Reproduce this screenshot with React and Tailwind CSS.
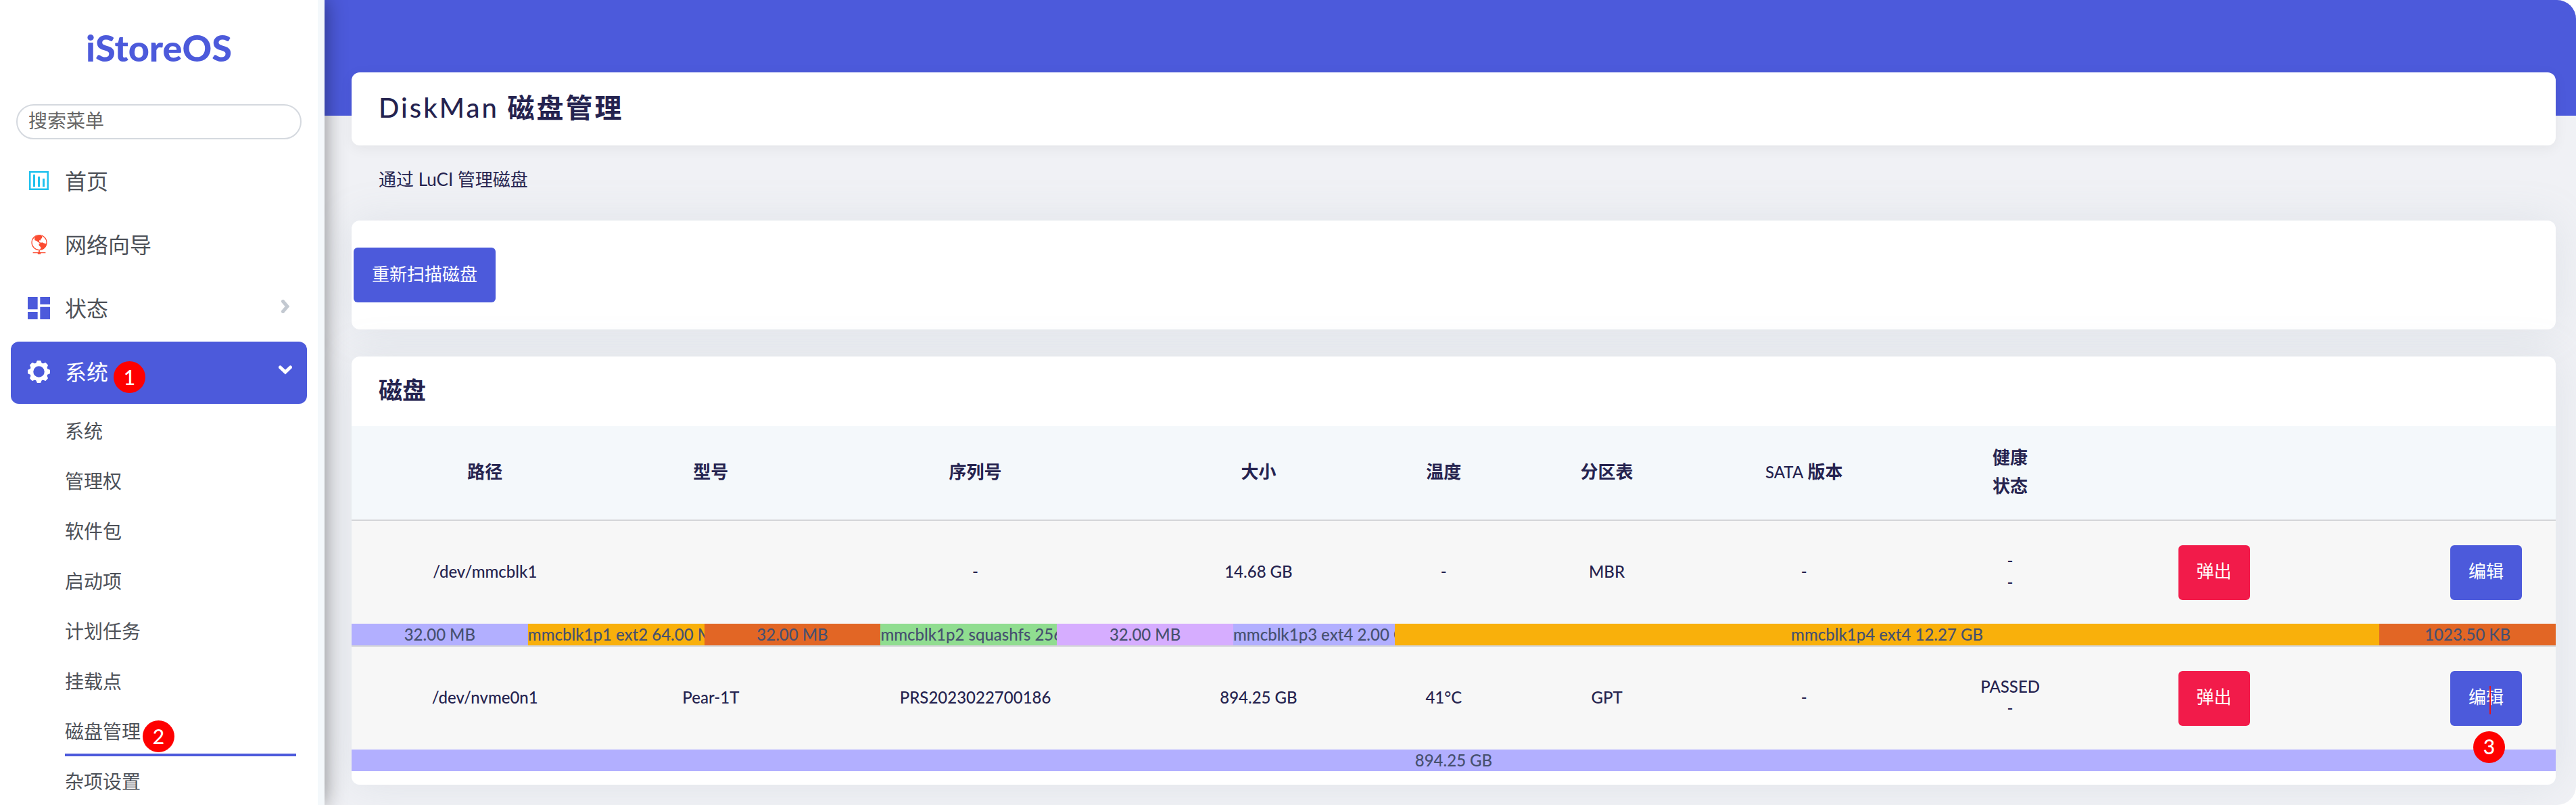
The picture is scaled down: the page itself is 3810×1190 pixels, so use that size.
import React from "react";

const SANS = "font-['Lato','Noto_Sans_CJK_SC',sans-serif]";

function HomeIcon() {
  return (
    <svg viewBox="0 0 29 28" className="h-7 w-[29px] text-[#20c1ee]" fill="currentColor" aria-hidden="true">
      <path d="M0 0h29v28H0zM2.5 2.5v23h24v-23z" fillRule="evenodd" />
      <rect x="6" y="5" width="3" height="18" />
      <rect x="13" y="8" width="3" height="15" />
      <rect x="20" y="11" width="3" height="12" />
    </svg>
  );
}

function GlobeIcon() {
  return (
    <svg viewBox="0 0 24 29" className="h-[29px] w-6 text-[#fb4b31]" fill="currentColor" aria-hidden="true">
      <circle cx="12" cy="11.5" r="11" fill="none" stroke="currentColor" strokeWidth="1.2" />
      <path d="M5.6 3 9 1.2 14 1 16.6 2.6 16 5 14 6.6 14.6 8.4 12.6 8 11.6 9.4 12.8 11 14.4 11.6 13.6 12.6 10.4 11 8 9 5.4 8.2 5 5z" />
      <path d="M12.8 12.4 16.4 11.2 19 12.6 22.8 13.6 21.6 17.2 18.4 20.6 13.6 22.2 14.4 18.6 11.8 16 11.4 13.6z" />
      <path d="M11.2 22h1.6v3l1.6 1h7v1.3h-7l-.4 1.4h-4l-.4-1.4h-7V26h7l1.6-1z" />
    </svg>
  );
}

function StatusIcon() {
  return (
    <svg viewBox="3 3 18 18" className="size-[33px] text-[#4c5adb]" fill="currentColor" aria-hidden="true">
      <path d="M3 13h8V3H3v10zm0 8h8v-6H3v6zm10 0h8V11h-8v10zm0-18v6h8V3h-8z" />
    </svg>
  );
}

function GearIcon() {
  return (
    <svg viewBox="-16 -16 32 32" className="size-[33px] text-white" aria-hidden="true">
      <circle r="10.5" fill="none" stroke="currentColor" strokeWidth="5" />
      {[0, 45, 90, 135, 180, 225, 270, 315].map((a) => (
        <path key={a} d="M-4.6-11 -2.9-15.3Q-2.7-16-2-16H2Q2.7-16 2.9-15.3L4.6-11z" fill="currentColor" transform={`rotate(${a})`} />
      ))}
    </svg>
  );
}

function Chevron({ open }) {
  return (
    <svg viewBox="0 0 20 20" className={open ? "size-5 text-white" : "size-5 text-[#c3c9d1]"} fill="none" stroke="currentColor" strokeWidth="5" strokeLinecap="round" aria-hidden="true">
      <path d={open ? "M2.5 6 10 13 17.5 6" : "M6.5 2.5 13 10 6.5 17.5"} />
    </svg>
  );
}

function Badge({ children, className }) {
  return (
    <span className={`absolute flex size-[47px] items-center justify-center rounded-full bg-[#fe0000] pb-0.5 text-[30px] font-medium leading-none text-white ${className}`}>
      {children}
    </span>
  );
}

const MENU = [
  { label: "首页", Icon: HomeIcon },
  { label: "网络向导", Icon: GlobeIcon },
  { label: "状态", Icon: StatusIcon, expandable: true },
  { label: "系统", Icon: GearIcon, expandable: true, open: true, badge: "1" },
];

const SUBMENU = ["系统", "管理权", "软件包", "启动项", "计划任务", "挂载点", "磁盘管理", "杂项设置"];

function Sidebar() {
  return (
    <aside className="relative z-10 w-[480px] shrink-0 border-r-[10px] border-[#f4f8fb] bg-white text-[#4d5158] shadow-[0_0_30px_rgba(0,0,0,0.45)]">
      <a href="#" className="flex h-[154px] items-center justify-center pb-3 text-[54px] font-black leading-none text-[#4c5adb]">
        iStoreOS
      </a>
      <div className="px-6">
        <input
          type="text"
          aria-label="搜索菜单"
          placeholder="搜索菜单"
          className="block h-[52px] w-full rounded-full border-2 border-[#d5d9df] bg-white px-4 pb-1 text-[28px] placeholder:text-[#666]"
        />
      </div>
      <nav className="px-4 pt-[17px]">
        <ul className="flex flex-col gap-0.5">
          {MENU.map(({ label, Icon, expandable, open, badge }) => (
            <li key={label}>
              <a
                href="#"
                className={`flex h-[92px] items-center rounded-xl pb-0.5 pl-[25px] pr-[22px] text-[32px] leading-none ${open ? "bg-[#4c5adb] text-white" : ""}`}
              >
                <span className="mr-[22px] flex w-[33px] justify-center pb-0.5">
                  <Icon />
                </span>
                <span className="relative">
                  {label}
                  {badge && <Badge className="-right-[55px] top-0">{badge}</Badge>}
                </span>
                {expandable && (
                  <span className="ml-auto pb-1.5">
                    <Chevron open={open} />
                  </span>
                )}
              </a>
            </li>
          ))}
        </ul>
        <ul className="ml-20 mr-4 mt-[3px]">
          {SUBMENU.map((label) => (
            <li key={label}>
              <a
                href="#"
                className={`flex h-[74px] items-center text-[28px] leading-none ${label === "磁盘管理" ? "shadow-[inset_0_-4px_0_#4c5adb]" : ""}`}
              >
                <span className="relative">
                  {label}
                  {label === "磁盘管理" && <Badge className="-right-[50px] -top-[2px]">2</Badge>}
                </span>
              </a>
            </li>
          ))}
        </ul>
      </nav>
    </aside>
  );
}

const COLUMNS = [
  { title: "路径", width: "w-[12.1%]" },
  { title: "型号", width: "w-[8.4%]" },
  { title: "序列号", width: "w-[15.6%]" },
  { title: "大小", width: "w-[10.1%]" },
  { title: "温度", width: "w-[6.7%]" },
  { title: "分区表", width: "w-[8.1%]" },
  { title: "SATA 版本", width: "w-[9.8%]" },
  { title: "健康\n状态", width: "w-[8.9%]" },
  { title: "", width: "w-[9.6%]" },
  { title: "", width: "w-[10.7%]" },
];

const DISKS = [
  {
    cells: ["/dev/mmcblk1", "", "-", "14.68 GB", "-", "MBR", "-", "-\n-"],
    parts: [
      { label: "32.00 MB", width: 8, color: "bg-[#b2afff]" },
      { label: "mmcblk1p1 ext2 64.00 MB", width: 8, color: "bg-[#f9b00b]" },
      { label: "32.00 MB", width: 8, color: "bg-[#e26625]" },
      { label: "mmcblk1p2 squashfs 256.00 MB", width: 8, color: "bg-[#90dd90]" },
      { label: "32.00 MB", width: 8, color: "bg-[#d6adff]" },
      { label: "mmcblk1p3 ext4 2.00 GB", width: 7.33, color: "bg-[#b2afff]" },
      { label: "mmcblk1p4 ext4 12.27 GB", width: 44.67, color: "bg-[#f9b00b]" },
      { label: "1023.50 KB", width: 8, color: "bg-[#e26625]" },
    ],
  },
  {
    cells: ["/dev/nvme0n1", "Pear-1T", "PRS2023022700186", "894.25 GB", "41°C", "GPT", "-", "PASSED\n-"],
    parts: [{ label: "894.25 GB", width: 100, color: "bg-[#b2afff]" }],
    marked: true,
  },
];

function ActionButton({ color, children }) {
  return (
    <button type="button" className={`h-[81px] rounded-md px-[27px] pb-1 text-[26px] leading-none text-white ${color}`}>
      {children}
    </button>
  );
}

function DiskTable() {
  return (
    <table className="w-full table-fixed border-collapse text-center text-2xl leading-8">
      <thead className="bg-[#f4f8fb]">
        <tr className="h-[139px] border-b-2 border-[#d4d5d8]">
          {COLUMNS.map(({ title, width }, i) => (
            <th key={i} scope="col" className={`whitespace-pre-line pb-1 text-[26px] font-bold leading-[42px] ${width}`}>
              {title.startsWith("SATA") ? (
                <>
                  <span className="text-2xl font-medium">SATA</span> 版本
                </>
              ) : (
                title
              )}
            </th>
          ))}
        </tr>
      </thead>
      {DISKS.map(({ cells, parts, marked }, i) => (
        <tbody key={i} className={i > 0 ? "border-t-2 border-[#d4d5d8]" : ""}>
          <tr className="h-[153px] bg-[#f7f7f7]">
            {cells.map((text, c) => (
              <td key={c} className="whitespace-pre-line pb-0.5 font-medium">
                {text}
              </td>
            ))}
            <td>
              <ActionButton color="bg-[#f21b4a]">弹出</ActionButton>
            </td>
            <td className="pr-[50px] text-right">
              <span className="relative inline-block align-middle">
                <ActionButton color="bg-[#4c5adb]">编辑</ActionButton>
                {marked && (
                  <>
                    <span className="absolute left-[58px] top-[22px] h-[42px] w-0.5 bg-[#e8141c]" />
                    <Badge className="left-[34px] top-[89px]">3</Badge>
                  </>
                )}
              </span>
            </td>
          </tr>
          <tr>
            <td colSpan={COLUMNS.length} className="p-0">
              <div className="flex h-8">
                {parts.map(({ label, width, color }, p) => (
                  <div
                    key={p}
                    className={`overflow-hidden whitespace-nowrap font-medium text-[#46506f] ${color}`}
                    style={{ width: `${width}%` }}
                  >
                    {label}
                  </div>
                ))}
              </div>
            </td>
          </tr>
        </tbody>
      ))}
    </table>
  );
}

export default function App() {
  return (
    <div className={`flex h-screen overflow-hidden rounded-r-[28px] bg-[#f0f1f5] text-[#25234f] ${SANS}`}>
      <Sidebar />
      <div className="min-w-0 flex-1">
        <header className="h-[171px] bg-[#4c5adb]" />
        <main className="relative -mt-16 pl-10 pr-[30px]">
          <h2 className="flex h-[108px] items-center rounded-xl bg-white px-10 pb-1 text-[40px] font-bold leading-none tracking-[3px] shadow-[0_4px_20px_rgba(0,0,0,0.06)]">
            <span>
              <span className="font-medium">DiskMan</span> 磁盘管理
            </span>
          </h2>
          <p className="flex h-[111px] items-center px-10 pb-3 text-[26px] leading-none">通过 LuCI 管理磁盘</p>
          <section className="rounded-xl bg-white px-[3px] py-10 shadow-[0_0_64px_rgba(136,152,170,0.15)]">
            <ActionButton color="bg-[#4c5adb] block">重新扫描磁盘</ActionButton>
          </section>
          <section className="mt-10 rounded-xl bg-white pb-5 shadow-[0_0_64px_rgba(136,152,170,0.15)]">
            <h3 className="flex h-[103px] items-center px-10 pb-1 text-[35px] font-bold leading-none">磁盘</h3>
            <DiskTable />
          </section>
        </main>
      </div>
    </div>
  );
}
